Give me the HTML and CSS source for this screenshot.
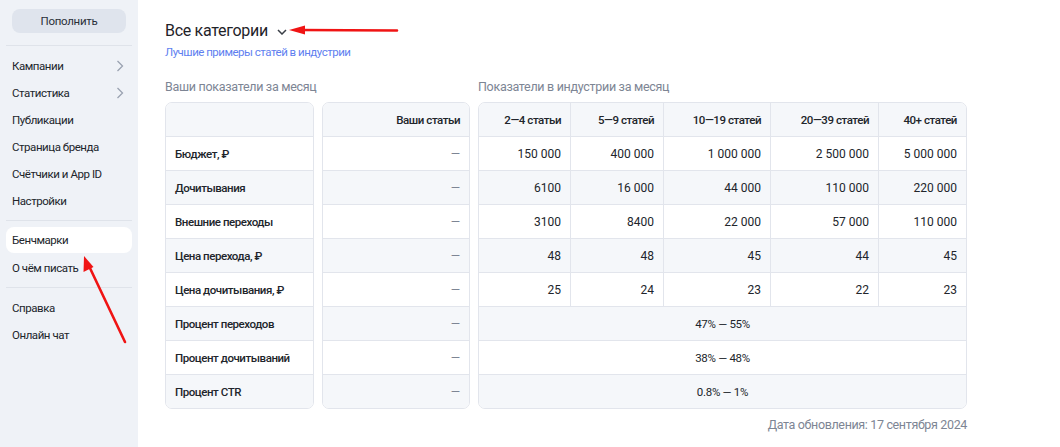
FILE: index.html
```html
<!DOCTYPE html>
<html lang="ru">
<head>
<meta charset="utf-8">
<title>Бенчмарки</title>
<link rel="stylesheet" href="styles.css">
</head>
<body>
<div class="page">
  <aside class="sidebar">
    <button class="topup">Пополнить</button>
    <div class="sep first"></div>
    <nav class="menu">
      <a class="item">Кампании<svg class="chev" viewBox="0 0 8 12" width="8" height="12"><path d="M1.5 1l5 5-5 5" fill="none" stroke="#9aa2b1" stroke-width="1.3"/></svg></a>
      <a class="item">Статистика<svg class="chev" viewBox="0 0 8 12" width="8" height="12"><path d="M1.5 1l5 5-5 5" fill="none" stroke="#9aa2b1" stroke-width="1.3"/></svg></a>
      <a class="item">Публикации</a>
      <a class="item">Страница бренда</a>
      <a class="item">Счётчики и App ID</a>
      <a class="item">Настройки</a>
    </nav>
    <div class="sep"></div>
    <nav class="menu">
      <a class="item active">Бенчмарки</a>
      <a class="item">О чём писать</a>
    </nav>
    <div class="sep"></div>
    <nav class="menu">
      <a class="item">Справка</a>
      <a class="item">Онлайн чат</a>
    </nav>
  </aside>
  <main class="main">
    <h1 class="title">Все категории <svg class="title-chev" viewBox="0 0 10 6" width="10" height="6"><path d="M1 1l4 4 4-4" fill="none" stroke="#3a3f47" stroke-width="1.5"/></svg></h1>
    <a class="link">Лучшие примеры статей в индустрии</a>
    <div class="tables">
      <div class="group group-own">
        <div class="caption">Ваши показатели за месяц</div>
        <div class="cards-own">
          <div class="card col col-a">
            <div class="cell head"></div>
            <div class="cell label">Бюджет, ₽</div>
            <div class="cell label alt">Дочитывания</div>
            <div class="cell label">Внешние переходы</div>
            <div class="cell label alt">Цена перехода, ₽</div>
            <div class="cell label">Цена дочитывания, ₽</div>
            <div class="cell label alt">Процент переходов</div>
            <div class="cell label">Процент дочитываний</div>
            <div class="cell label alt last">Процент CTR</div>
          </div>
          <div class="card col col-b">
            <div class="cell head num">Ваши статьи</div>
            <div class="cell num dash">—</div>
            <div class="cell num dash alt">—</div>
            <div class="cell num dash">—</div>
            <div class="cell num dash alt">—</div>
            <div class="cell num dash">—</div>
            <div class="cell num dash alt">—</div>
            <div class="cell num dash">—</div>
            <div class="cell num dash alt last">—</div>
          </div>
        </div>
      </div>
      <div class="group group-ind">
        <div class="caption">Показатели в индустрии за месяц</div>
        <div class="card grid5">
          <div class="cell head num">2—4 статьи</div>
          <div class="cell head num">5—9 статей</div>
          <div class="cell head num">10—19 статей</div>
          <div class="cell head num">20—39 статей</div>
          <div class="cell head num">40+ статей</div>

          <div class="cell num">150 000</div>
          <div class="cell num">400 000</div>
          <div class="cell num">1 000 000</div>
          <div class="cell num">2 500 000</div>
          <div class="cell num">5 000 000</div>

          <div class="cell num alt">6100</div>
          <div class="cell num alt">16 000</div>
          <div class="cell num alt">44 000</div>
          <div class="cell num alt">110 000</div>
          <div class="cell num alt">220 000</div>

          <div class="cell num">3100</div>
          <div class="cell num">8400</div>
          <div class="cell num">22 000</div>
          <div class="cell num">57 000</div>
          <div class="cell num">110 000</div>

          <div class="cell num alt">48</div>
          <div class="cell num alt">48</div>
          <div class="cell num alt">45</div>
          <div class="cell num alt">44</div>
          <div class="cell num alt">45</div>

          <div class="cell num">25</div>
          <div class="cell num">24</div>
          <div class="cell num">23</div>
          <div class="cell num">22</div>
          <div class="cell num">23</div>

          <div class="cell span alt">47% — 55%</div>
          <div class="cell span">38% — 48%</div>
          <div class="cell span alt last">0.8% — 1%</div>
        </div>
      </div>
    </div>
    <div class="updated">Дата обновления: 17 сентября 2024</div>
  </main>
  <svg class="annot" width="1060" height="447" viewBox="0 0 1060 447">
    <path d="M397 30.5 L300 30" stroke="#f01414" stroke-width="2.6" fill="none" stroke-linecap="round"/>
    <path d="M289 30 L305 25.5 L305 34.5 Z" fill="#f01414"/>
    <path d="M125 342 L89 266" stroke="#f01414" stroke-width="2.6" fill="none" stroke-linecap="round"/>
    <path d="M84 256 L83.5 272 L93.5 267 Z" fill="#f01414"/>
  </svg>
</div>
</body>
</html>
```
FILE: styles.css
```css
* { box-sizing: border-box; }
html, body { margin: 0; padding: 0; }
body {
  font-family: "Roboto", "Noto Sans", "DejaVu Sans", sans-serif;
  color: #21252b;
  background: #fff;
  width: 1060px;
  height: 447px;
  overflow: hidden;
}
.page {
  position: relative;
  display: flex;
  width: 1060px;
  height: 447px;
}
.sidebar {
  width: 138px;
  flex: none;
  background: #eff2f7;
  padding: 9px 6px 0;
  display: flex;
  flex-direction: column;
}
.topup {
  margin: 0 6px;
  height: 24px;
  border: none;
  border-radius: 8px;
  background: #dfe4ed;
  font-family: inherit;
  font-size: 11.5px;
  letter-spacing: -0.3px;
  color: #2a2f38;
  cursor: pointer;
}
.sep {
  height: 1px;
  background: #dfe3ea;
  margin: 6px 0 6px;
}
.sep.first { margin-top: 12px; }
.menu { display: flex; flex-direction: column; }
.item {
  display: flex;
  align-items: center;
  justify-content: space-between;
  height: 27px;
  padding: 0 8px 0 6px;
  font-size: 11.5px;
  letter-spacing: -0.45px;
  color: #21252b;
  border-radius: 8px;
}
.item.active { background: #fff; height: 26px; margin-bottom: 1px; }
.chev { display: block; }

.main {
  flex: 1;
  padding: 19px 0 0 27px;
  display: flex;
  flex-direction: column;
}
.title {
  margin: 0;
  font-size: 16px;
  letter-spacing: -0.3px;
  font-weight: 400;
  color: #1f2329;
  line-height: 24px;
  display: flex;
  align-items: center;
  gap: 9px;
}
.title-chev { display: block; margin-top: 1px; }
.link {
  margin-top: 1px;
  font-size: 11.5px;
  letter-spacing: -0.5px;
  color: #5f7ff0;
  line-height: 16px;
}
.tables {
  display: flex;
  gap: 8px;
  margin-top: 19px;
  width: 802px;
}
.caption {
  font-size: 12.5px;
  letter-spacing: -0.3px;
  color: #7d8594;
  line-height: 16px;
  margin-bottom: 7px;
}
.cards-own { display: flex; gap: 8px; }
.card {
  border: 1px solid #e2e5ec;
  border-radius: 7px;
  overflow: hidden;
  background: #fff;
}
.col { display: flex; flex-direction: column; }
.col-a { width: 149px; }
.col-b { width: 148px; }
.group-ind { flex: 1; }
.grid5 {
  display: grid;
  grid-template-columns: 92px 93px 107px 108px 1fr;
}
.cell {
  height: 34px;
  border-bottom: 1px solid #e2e5ec;
  display: flex;
  align-items: center;
  font-size: 12px;
  color: #21252b;
  padding: 0 9px;
  background: #fff;
  white-space: nowrap;
}
.cell.last { border-bottom: none; height: 33px; }
.cell.head { background: #f5f7fa; font-weight: 500; font-size: 11.5px; letter-spacing: -0.45px; }
.cell.alt { background: #f5f7fa; }
.label { font-weight: 500; font-size: 11.5px; letter-spacing: -0.45px; }
.num { justify-content: flex-end; }
.dash { color: #7d8594; }
.grid5 .cell { border-right: 1px solid #e2e5ec; }
.grid5 .cell:nth-child(5n) { border-right: none; }
.grid5 .span { grid-column: 1 / -1; justify-content: center; border-right: none; font-size: 11.5px; letter-spacing: -0.3px; }
.updated {
  width: 802px;
  text-align: right;
  font-size: 12.5px;
  letter-spacing: -0.35px;
  color: #7d8594;
  margin-top: 8px;
}
.annot {
  position: absolute;
  left: 0;
  top: 0;
  pointer-events: none;
}
```
